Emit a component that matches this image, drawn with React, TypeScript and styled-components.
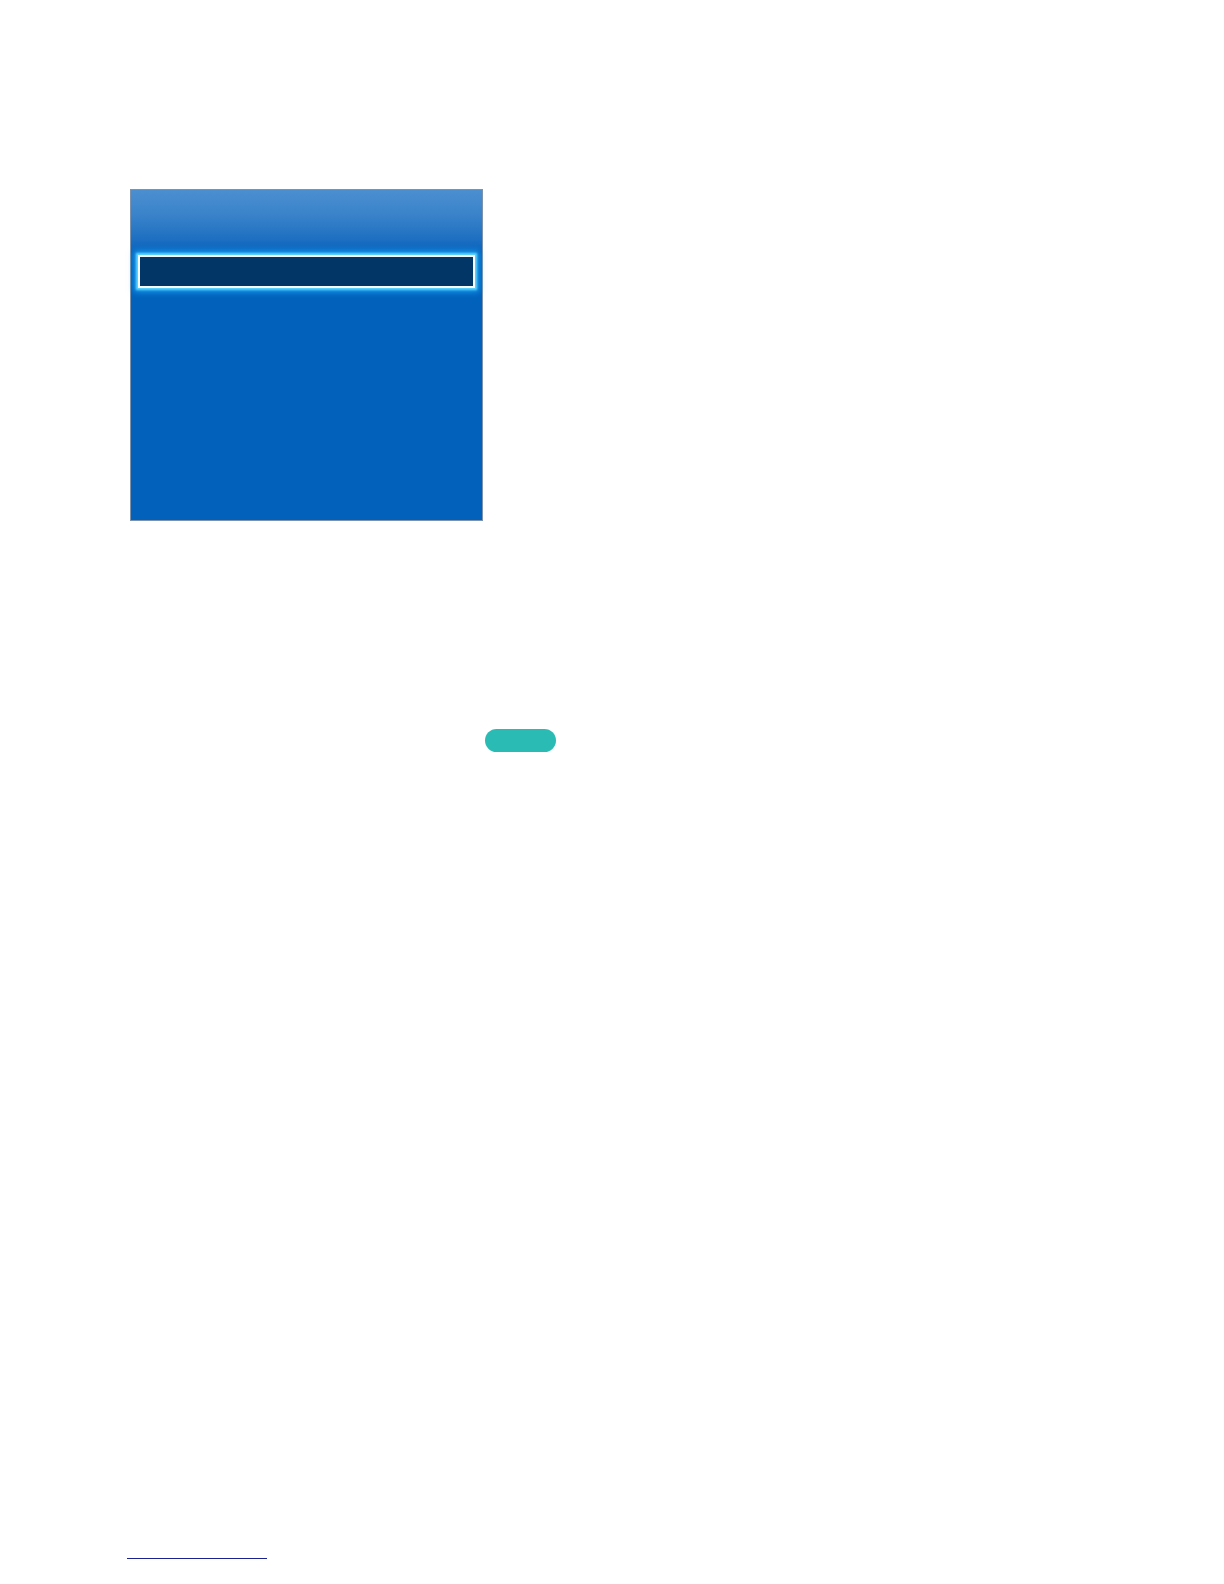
import React from "react";
import styled, { createGlobalStyle } from "styled-components";

/* ---------------- global ---------------- */

const Global = createGlobalStyle`
  html, body {
    margin: 0;
    padding: 0;
    background: #ffffff;
    font-family: "Liberation Sans", Arial, sans-serif;
  }
`;

/* ---------------- layout ---------------- */

const Page = styled.div`
  width: 1224px;
  height: 1584px;
  display: flex;
  flex-direction: column;
  align-items: flex-start;
  padding-top: 189px;
  box-sizing: border-box;
`;

const Panel = styled.div`
  margin-left: 130px;
  width: 353px;
  height: 332px;
  box-sizing: border-box;
  border: 1px solid #7d93ad;
  background: linear-gradient(
    to bottom,
    #4b8fd0 0px,
    #3a83ca 25px,
    #1f70c2 48px,
    #0865bd 62px,
    #0262bb 80px,
    #0262bb 100%
  );
  display: flex;
  flex-direction: column;
  padding: 65px 7px 0 7px;
`;

const Selected = styled.div`
  height: 33px;
  box-sizing: border-box;
  border: 2px solid #f4fcff;
  background: #013667;
  box-shadow: 0 0 2px 2px #5fd6ff, 0 0 6px 4px rgba(30, 170, 255, 0.75);
`;

const Pill = styled.div`
  margin-top: 208px;
  margin-left: 485px;
  width: 71px;
  height: 23px;
  border-radius: 12px;
  background: #2abcb4;
`;

const FootLine = styled.div`
  margin-top: 806px;
  margin-left: 127px;
  width: 140px;
  height: 1px;
  background: #1c2190;
`;

/* ---------------- page ---------------- */

export default function App() {
  return (
    <>
      <Global />
      <Page>
        <Panel>
          <Selected />
        </Panel>
        <Pill />
        <FootLine />
      </Page>
    </>
  );
}
